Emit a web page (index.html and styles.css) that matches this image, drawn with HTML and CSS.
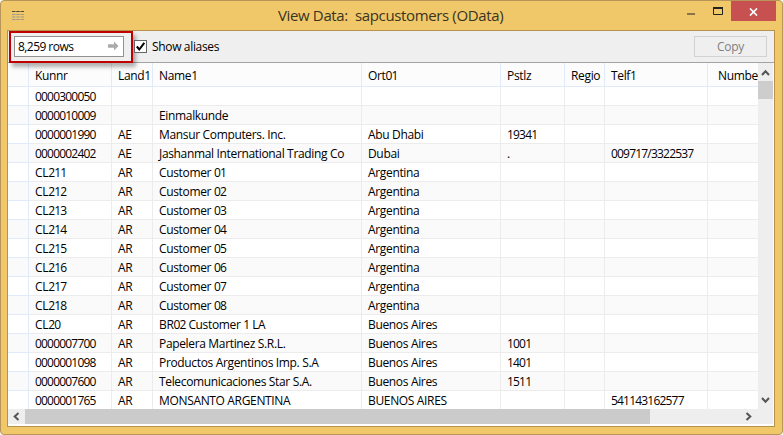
FILE: index.html
```html
<!DOCTYPE html>
<html lang="en">
<head>
<meta charset="utf-8">
<title>View Data</title>
<link rel="stylesheet" href="styles.css">
</head>
<body>
<div class="window">
  <header class="titlebar">
    <svg class="app-icon" width="12" height="10" viewBox="0 0 12 10"><path d="M0 .5H12" stroke="#4d4a42" stroke-dasharray="3.500 .75"/><path d="M0 3.500H12M0 6H12M0 8.500H12" stroke="#a09a8a" stroke-dasharray="3.500 .75"/></svg>
    <h1>View Data:&nbsp; sapcustomers (OData)</h1>
    <div class="controls">
      <svg width="8" height="18" viewBox="0 0 8 18"><path d="M0 13h8" stroke="#8a7447" stroke-width="2"/></svg>
      <svg class="max" width="10" height="18" viewBox="0 0 10 18"><path d="M.5 6v7.500h9V6" fill="none" stroke="#222"/><path d="M0 7h10" stroke="#222" stroke-width="2"/></svg>
      <div class="close"><svg width="9" height="8" viewBox="0 0 9 8"><path d="M1 .5 8 7.500M8 .5 1 7.500" stroke="#fff" stroke-width="1.700"/></svg></div>
    </div>
  </header>
  <main class="client">
    <div class="toolbar">
      <div class="highlight">
        <div class="rows-field"><span>8,259 rows</span><svg width="11" height="10" viewBox="0 0 11 10"><path d="M0 3.200h6V.5L10.500 5 6 9.500V6.800H0z" fill="#aaa"/></svg></div>
      </div>
      <div class="check"><svg width="11" height="11" viewBox="0 0 11 11"><path d="M1.800 5.500 4.300 8.500 9.300 1.800" fill="none" stroke="#000" stroke-width="2"/></svg></div>
      <span class="check-label">Show aliases</span>
      <div class="copy">Copy</div>
    </div>
    <div class="grid-area">
      <div class="table" id="table"></div>
      <div class="vscroll">
        <svg width="15" height="18" viewBox="0 0 15 18"><path d="M4 12 7.500 8.200 11 12" fill="none" stroke="#555" stroke-width="2"/></svg>
        <div class="vthumb"></div>
        <svg class="down" width="15" height="18" viewBox="0 0 15 18"><path d="M4 7 7.500 10.800 11 7" fill="none" stroke="#555" stroke-width="2"/></svg>
      </div>
    </div>
    <div class="hscroll">
      <svg width="17" height="15" viewBox="0 0 17 15"><path d="M10.500 4 6.700 7.500 10.500 11" fill="none" stroke="#555" stroke-width="2"/></svg>
      <div class="hthumb"></div>
      <svg class="right" width="17" height="15" viewBox="0 0 17 15"><path d="M6.500 4 10.300 7.500 6.500 11" fill="none" stroke="#555" stroke-width="2"/></svg>
    </div>
  </main>
</div>
<script src="table.js"></script>
</body>
</html>
```
FILE: table.js
```js
const rows = [
  ['Kunnr', 'Land1', 'Name1', 'Ort01', 'Pstlz', 'Regio', 'Telf1', 'Numbe'],
  ['0000300050'],
  ['0000010009', '', 'Einmalkunde'],
  ['0000001990', 'AE', 'Mansur Computers. Inc.', 'Abu Dhabi', '19341'],
  ['0000002402', 'AE', 'Jashanmal International Trading Co', 'Dubai', '.', '', '009717/3322537'],
  ...[1, 2, 3, 4, 5, 6, 7, 8].map(n => ['CL21' + n, 'AR', 'Customer 0' + n, 'Argentina']),
  ['CL20', 'AR', 'BR02 Customer 1 LA', 'Buenos Aires'],
  ['0000007700', 'AR', 'Papelera Martinez S.R.L.', 'Buenos Aires', '1001'],
  ['0000001098', 'AR', 'Productos Argentinos Imp. S.A', 'Buenos Aires', '1401'],
  ['0000007600', 'AR', 'Telecomunicaciones Star S.A.', 'Buenos Aires', '1511'],
  ['0000001765', 'AR', 'MONSANTO ARGENTINA', 'BUENOS AIRES', '', '', '541143162577']
];
const table = document.getElementById('table');
rows.forEach((cells, index) => {
  const row = document.createElement('div');
  row.className = index ? 'row' : 'row head';
  row.append(document.createElement('div'));
  for (let i = 0; i < 8; i++) {
    const cell = document.createElement('div');
    // Digits are set tighter than words.
    for (const part of (cells[i] || '').split(/([\d/]+)/)) {
      if (!part) continue;
      const span = document.createElement('span');
      span.textContent = part;
      if (/^\d/.test(part)) span.className = 'num';
      cell.append(span);
    }
    row.append(cell);
  }
  table.append(row);
});
```
FILE: styles.css
```css
* { box-sizing: border-box; }
body { margin: 0; background: #fff; font: 12px/19px "Open Sans", "Noto Sans", sans-serif; color: #000; overflow: hidden; }
svg { display: block; flex: none; }
.window { width: 783px; height: 435px; background: #f0c869; border: 1px solid #b8965a; border-radius: 4px; padding: 0 7px 7px 6px; display: flex; flex-direction: column; }
.titlebar { height: 29px; display: flex; position: relative; }
.app-icon { margin: 10px 0 0 5px; }
h1 { position: absolute; left: 271px; top: 4px; margin: 0; font-size: 15px; line-height: 21px; font-weight: 400; letter-spacing: -.36px; color: #3a3322; white-space: nowrap; }
.controls { margin-left: auto; display: flex; height: 20px; margin-right: -1px; }
.controls .max { margin: 0 8px 0 18px; }
.close { width: 45px; height: 20px; background: #c75050; display: grid; place-items: center; padding-top: 2px; }
.client { height: 398px; border: 1px solid #b8924a; background: #fff; display: flex; flex-direction: column; }
.toolbar { height: 32px; flex: none; background: #efefef; border-bottom: 1px solid #a3a3a3; display: flex; align-items: flex-start; }
.highlight { width: 124px; height: 32px; margin-left: 1px; border: 2px solid #c00000; box-shadow: 3px 4px 4px rgba(0,0,0,.3); padding: 3px 0 0 3px; position: relative; z-index: 2; background: #efefef; }
.rows-field { width: 110px; height: 21px; border: 1px solid #929292; background: #fff; display: flex; align-items: center; justify-content: space-between; padding: 0 4px 0 3px; letter-spacing: -.55px; }
.check { width: 13px; height: 13px; margin: 9px 0 0 1px; border: 1px solid #666; background: #fff; position: relative; z-index: 3; }
.check-label { margin: 6px 0 0 5px; letter-spacing: -.34px; }
.copy { width: 73px; height: 21px; margin: 5px 7px 0 auto; border: 1px solid #d2d2d2; color: #808080; text-align: center; letter-spacing: -.3px; line-height: 20px; }
.grid-area { height: 346px; flex: none; display: flex; }
.table { width: 750px; overflow: hidden; }
.row { display: grid; grid-template-columns: 21px 83px 41px 209px 139px 64px 40px 103px 50px; height: 19px; }
.row > div { border-right: 1px solid #ececec; border-bottom: 1px solid #ececec; padding-left: 6px; white-space: pre; overflow: hidden; letter-spacing: -.34px; line-height: 19px; }
.row > div:first-child { border-color: #dfeafa; }
.row > div:last-child { border-right: 0; padding-left: 10px; }
.row:nth-child(odd) { background: #fafafa; }
.row.head { height: 24px; background: #fcfcfc; }
.row.head > div { border-color: #dfeafa; line-height: 25px; }
.row .num { letter-spacing: -.8px; }
.vscroll { width: 15px; background: #eee; display: flex; flex-direction: column; }
.vthumb { height: 18px; background: #cdcdcd; }
.vscroll .down { margin-top: auto; }
.hscroll { height: 15px; width: 765px; background: #eee; display: flex; }
.hthumb { width: 625px; background: #cbcbcb; }
.hscroll .right { margin-left: auto; margin-right: 16px; }
```
